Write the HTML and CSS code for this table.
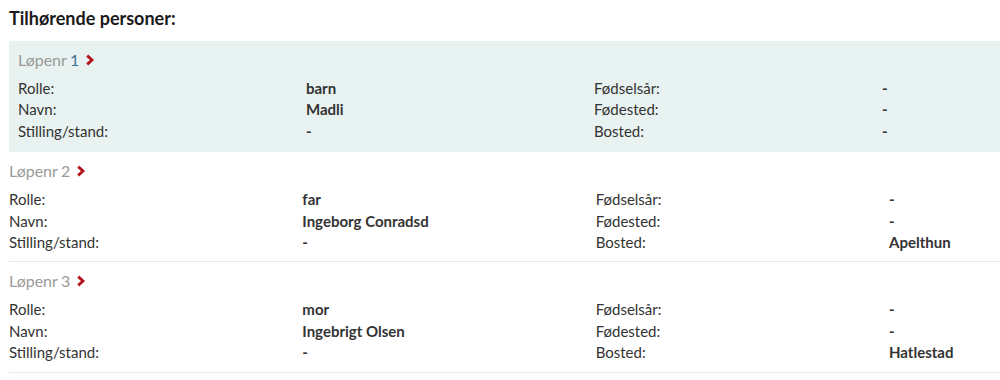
FILE: index.html
```html
<!DOCTYPE html>
<html lang="no">
<head>
<meta charset="utf-8">
<title>Tilhørende personer</title>
<link rel="stylesheet" href="styles.css">
</head>
<body>
<div class="page">
  <h2 class="title">Tilhørende personer:</h2>
  <div class="list">
    <div class="person active">
      <div class="head">Løpenr <span class="num">1</span> <svg class="chev" width="10" height="12" viewBox="0 0 10 12"><polyline points="2.2,1.6 7,6 2.2,10.4" fill="none" stroke="#b3121b" stroke-width="2.8"/></svg></div>
      <div class="grid">
        <span class="lbl">Rolle:</span><span class="val">barn</span><span class="lbl">Fødselsår:</span><span class="val">-</span>
        <span class="lbl">Navn:</span><span class="val">Madli</span><span class="lbl">Fødested:</span><span class="val">-</span>
        <span class="lbl">Stilling/stand:</span><span class="val">-</span><span class="lbl">Bosted:</span><span class="val">-</span>
      </div>
    </div>
    <div class="person">
      <div class="head">Løpenr <span class="num">2</span> <svg class="chev" width="10" height="12" viewBox="0 0 10 12"><polyline points="2.2,1.6 7,6 2.2,10.4" fill="none" stroke="#b3121b" stroke-width="2.8"/></svg></div>
      <div class="grid">
        <span class="lbl">Rolle:</span><span class="val">far</span><span class="lbl">Fødselsår:</span><span class="val">-</span>
        <span class="lbl">Navn:</span><span class="val">Ingeborg Conradsd</span><span class="lbl">Fødested:</span><span class="val">-</span>
        <span class="lbl">Stilling/stand:</span><span class="val">-</span><span class="lbl">Bosted:</span><span class="val">Apelthun</span>
      </div>
    </div>
    <div class="person">
      <div class="head">Løpenr <span class="num">3</span> <svg class="chev" width="10" height="12" viewBox="0 0 10 12"><polyline points="2.2,1.6 7,6 2.2,10.4" fill="none" stroke="#b3121b" stroke-width="2.8"/></svg></div>
      <div class="grid">
        <span class="lbl">Rolle:</span><span class="val">mor</span><span class="lbl">Fødselsår:</span><span class="val">-</span>
        <span class="lbl">Navn:</span><span class="val">Ingebrigt Olsen</span><span class="lbl">Fødested:</span><span class="val">-</span>
        <span class="lbl">Stilling/stand:</span><span class="val">-</span><span class="lbl">Bosted:</span><span class="val">Hatlestad</span>
      </div>
    </div>
  </div>
</div>
</body>
</html>
```

FILE: styles.css
```css
html, body {
  margin: 0;
  padding: 0;
  background: #ffffff;
}
body {
  font-family: Lato, "Liberation Sans", sans-serif;
  color: #333333;
  font-size: 15px;
  line-height: 21.4px;
}
.page {
  padding: 8px 0 0 9px;
}
.title {
  margin: 0 0 13px;
  font-size: 18px;
  line-height: 20px;
  font-weight: 700;
  color: #1a1a1a;
}
.person {
  padding: 9px 0 8px;
  border-bottom: 1px solid #e8e8e8;
}
.person.active {
  background: #e8f2f0;
  padding: 9px 9px 10px;
  border-bottom: none;
}
.head {
  font-size: 16px;
  line-height: 20px;
  color: #9a9a9a;
  margin-bottom: 8px;
  display: flex;
  align-items: center;
  gap: 4px;
}
.head .num {
  margin-left: -1px;
}
.person.active .num {
  color: #3d7394;
}
.chev {
  display: block;
  margin-left: 2px;
}
.grid {
  display: grid;
  grid-template-columns: 29.6% 29.6% 29.6% 1fr;
}
.val {
  font-weight: 700;
  white-space: nowrap;
}
```
